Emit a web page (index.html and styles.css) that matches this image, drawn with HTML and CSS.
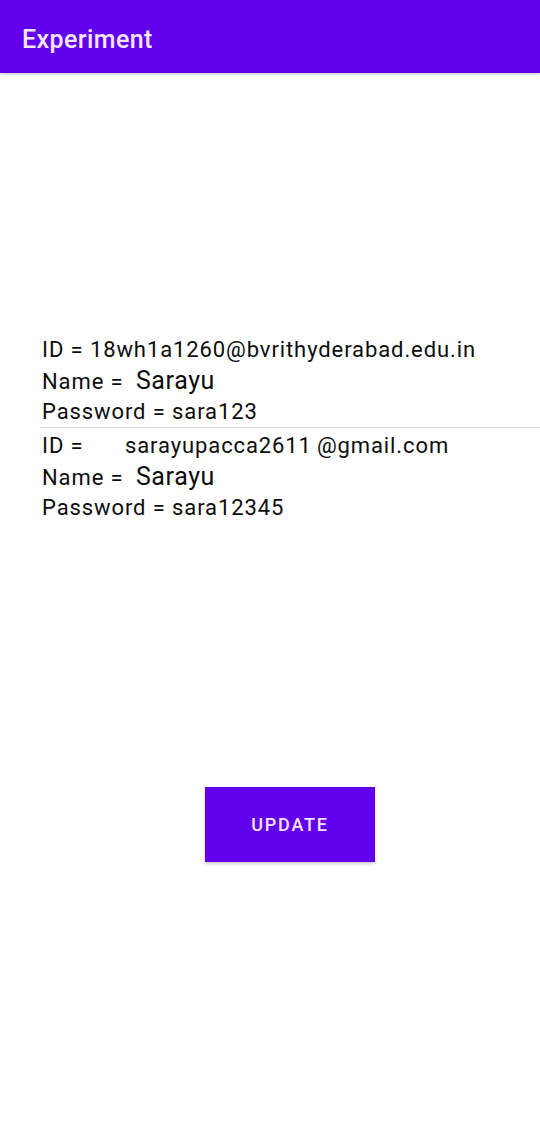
FILE: index.html
```html
<!DOCTYPE html>
<html>
<head>
<meta charset="utf-8">
<link rel="stylesheet" href="styles.css">
</head>
<body>
<header class="appbar"><span class="title">Experiment</span></header>
<main class="content">
  <section class="record">
    <div class="line">ID = 18wh1a1260@bvrithyderabad.edu.in</div>
    <div class="line">Name = <span class="big">Sarayu</span></div>
    <div class="line">Password = sara123</div>
  </section>
  <div class="divider"></div>
  <section class="record">
    <div class="line">ID = <span class="gap"></span>sarayupacca2611<span class="small-gap"></span>@gmail.com</div>
    <div class="line">Name = <span class="big">Sarayu</span></div>
    <div class="line">Password = sara12345</div>
  </section>
  <div class="actions"><button class="btn">UPDATE</button></div>
</main>
</body>
</html>
```
FILE: styles.css
```css
html, body { margin: 0; padding: 0; }
body { width: 540px; height: 1132px; background: #fff; font-family: Roboto, "Noto Sans", sans-serif; color: #0d0d0d; overflow: hidden; }
.appbar { height: 73px; background: #6200ee; display: flex; align-items: center; padding-left: 22px; padding-top: 5px; box-sizing: border-box; box-shadow: 0 1px 3px rgba(0,0,0,0.25); }
.title { color: #f4e6ff; font-size: 25px; font-weight: 500; letter-spacing: 0.4px; }
.content { padding-top: 261px; }
.record { padding-left: 42px; display: flex; flex-direction: column; }
.line { height: 31px; line-height: 31px; font-size: 22px; letter-spacing: 0.9px; white-space: nowrap; }
.big { font-size: 25px; margin-left: 6px; letter-spacing: 0.6px; }
.divider { margin-left: 40px; height: 1px; background: #dcdcdc; margin-top: 0; margin-bottom: 2px; }
.gap { display: inline-block; width: 35px; }
.small-gap { display: inline-block; width: 5px; }
.actions { display: flex; justify-content: center; padding-top: 264px; padding-left: 40px; }
.btn { width: 170px; height: 75px; background: #6200ee; color: #f4e6ff; border: none; font-family: Roboto, sans-serif; font-size: 18px; font-weight: 500; letter-spacing: 1.8px; box-shadow: 0 2px 3px rgba(0,0,0,0.2); }
```
